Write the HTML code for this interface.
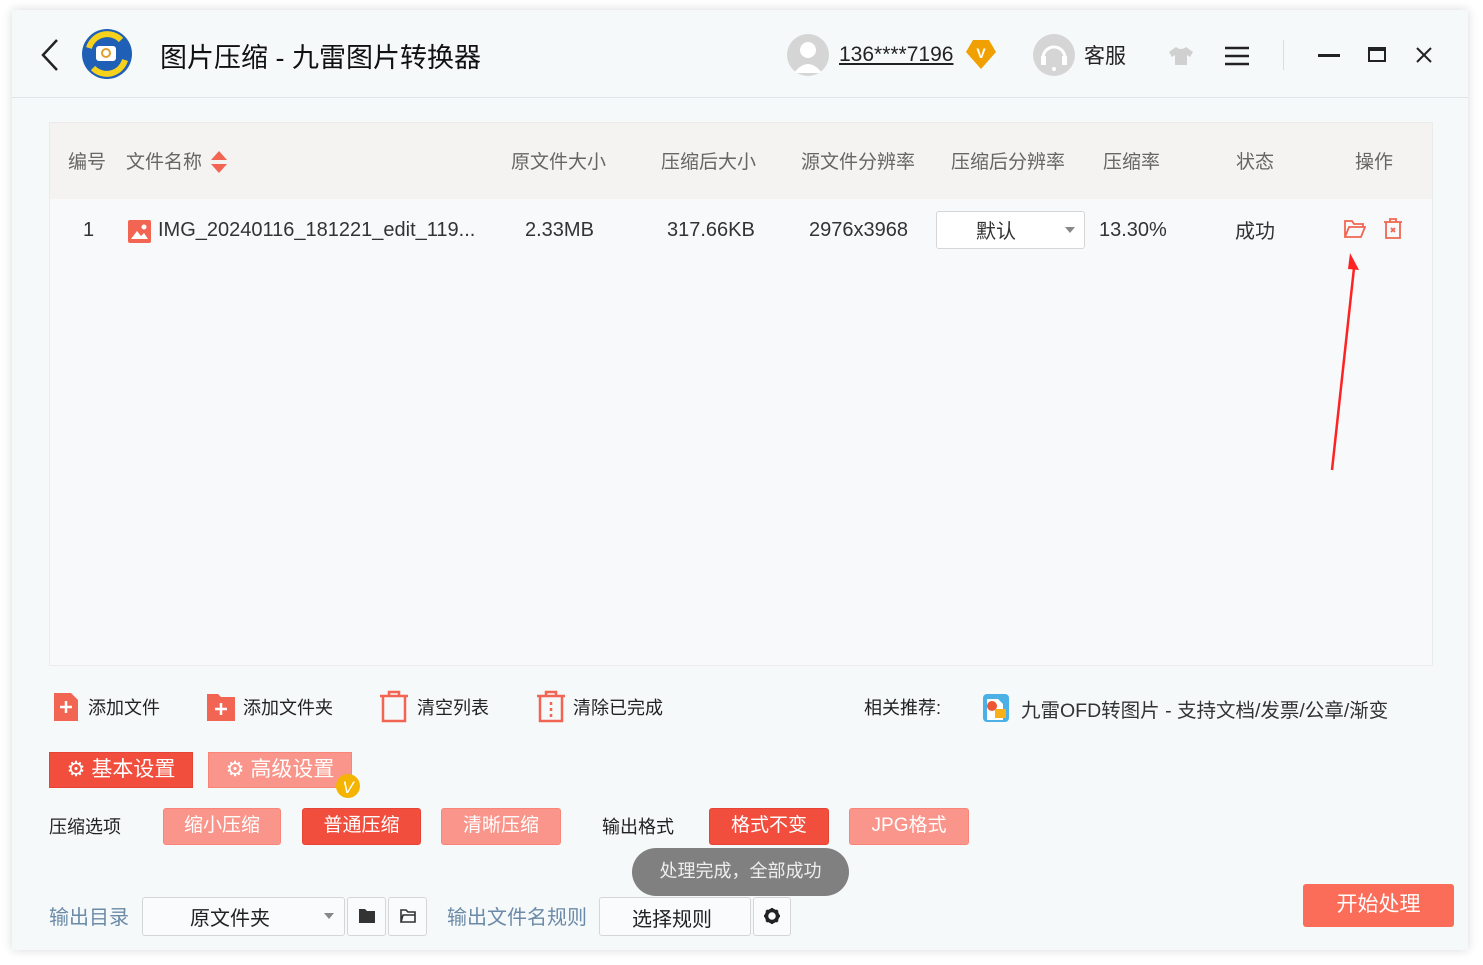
<!DOCTYPE html>
<html><head><meta charset="utf-8"><style>
*{box-sizing:border-box;margin:0;padding:0}
body{width:1483px;height:965px;background:#fff;position:relative;overflow:hidden;font-family:"Liberation Sans","Noto Sans CJK SC",sans-serif;color:#222}
.win{position:absolute;left:12px;top:10px;width:1456px;height:940px;background:#f6f9fa;box-shadow:0 0 10px rgba(0,0,0,.15)}
.a{position:absolute;white-space:nowrap}
.hdr{position:absolute;left:0;top:0;width:1456px;height:88px;border-bottom:1px solid #e2e5e8}
.tbl{position:absolute;left:37px;top:112px;width:1384px;height:544px;border:1px solid #ebebeb;background:#f7f9fa}
.th{position:absolute;left:0;top:0;width:100%;height:76px;background:#f4f3f2}
.th span{position:absolute;top:24px;font-size:19px;color:#666}
.row span{position:absolute;top:96px;font-size:20px;color:#333}
.row span.c{top:92px}
.btn{position:absolute;height:37px;border-radius:3px;font-size:19px;color:#fff;text-align:center;line-height:33px}
.dk{background:#f24e3e;border:1px solid #e64436}
.lt{background:#f9958a;border:1px solid #f88577}
.box{position:absolute;background:#fafbfc;border:1px solid #d4d6d8;border-radius:3px}
</style></head><body>
<div class="win">
<div class="hdr">
 <svg class="a" style="left:28px;top:28px" width="20" height="34"><path d="M17 2 L3 17 L17 32" stroke="#222" stroke-width="2.5" fill="none"/></svg>
 <svg class="a" style="left:69px;top:18px" width="52" height="52"><circle cx="26" cy="26" r="25" fill="#1f5fb5"/><path d="M8 20 A19 19 0 0 1 40 12" stroke="#f7d21c" stroke-width="6" fill="none"/><path d="M44 32 A19 19 0 0 1 12 40" stroke="#f7d21c" stroke-width="6" fill="none"/><rect x="15" y="18" width="20" height="15" rx="3" fill="#fff"/><circle cx="25" cy="25" r="4" fill="none" stroke="#e0a030" stroke-width="2"/></svg>
 <div class="a" style="left:148px;top:26px;font-size:27px;color:#111">图片压缩 - 九雷图片转换器</div>
 <svg class="a" style="left:774px;top:23px" width="44" height="44"><circle cx="22" cy="22" r="21" fill="#d5d5d5"/><circle cx="22" cy="17" r="8" fill="#fff"/><path d="M8 40 Q22 22 36 40Z" fill="#fff"/></svg>
 <div class="a" style="left:827px;top:33px;font-size:21px;text-decoration:underline">136****7196</div>
 <svg class="a" style="left:953px;top:28px" width="32" height="32"><path d="M8 2H24L31 14L16 31L1 14Z" fill="#f0a000"/><text x="16" y="20" font-size="14" font-weight="bold" fill="#fff" text-anchor="middle" font-family="Liberation Sans">V</text></svg>
 <svg class="a" style="left:1020px;top:23px" width="44" height="44"><circle cx="22" cy="22" r="21" fill="#d5d5d5"/><path d="M11 25 A11 11 0 0 1 33 25" stroke="#fff" stroke-width="3" fill="none"/><rect x="9" y="23" width="5" height="9" fill="#fff"/><rect x="30" y="23" width="5" height="9" fill="#fff"/><circle cx="22" cy="36" r="2" fill="#fff"/></svg>
 <div class="a" style="left:1072px;top:30px;font-size:21px">客服</div>
 <svg class="a" style="left:1156px;top:36px" width="26" height="20"><path d="M8 1 L1 6 L4 11 L7 9 L7 19 L19 19 L19 9 L22 11 L25 6 L18 1 Q13 5 8 1Z" fill="#d0d0d0"/></svg>
 <svg class="a" style="left:1212px;top:36px" width="26" height="20"><path d="M1 2H25M1 10H25M1 18H25" stroke="#222" stroke-width="2.5"/></svg>
 <div class="a" style="left:1271px;top:30px;width:1px;height:30px;background:#ddd"></div>
 <div class="a" style="left:1306px;top:44px;width:22px;height:3px;background:#222"></div>
 <div class="a" style="left:1356px;top:37px;width:18px;height:15px;border:2px solid #222;border-top-width:4px"></div>
 <svg class="a" style="left:1403px;top:36px" width="18" height="18"><path d="M2 2L16 16M16 2L2 16" stroke="#222" stroke-width="2"/></svg>
</div>
<div class="tbl">
 <div class="th">
  <span style="left:18px">编号</span><span style="left:76px">文件名称</span>
  <svg class="a" style="left:160px;top:27px" width="18" height="24"><path d="M9 1L17 10H1Z M9 23L17 14H1Z" fill="#f26552"/></svg>
  <span style="left:461px">原文件大小</span><span style="left:611px">压缩后大小</span><span style="left:751px">源文件分辨率</span><span style="left:901px">压缩后分辨率</span><span style="left:1053px">压缩率</span><span style="left:1186px">状态</span><span style="left:1305px">操作</span>
 </div>
 <div class="row">
  <span style="left:33px">1</span>
  <svg class="a" style="left:78px;top:97px" width="23" height="23"><rect width="23" height="23" rx="2" fill="#f26552"/><path d="M3 19L9 11L13 16L16 13L20 19Z" fill="#fff"/><circle cx="16" cy="7" r="2.5" fill="#fff"/></svg>
  <span style="left:108px">IMG_20240116_181221_edit_119...</span>
  <span style="left:475px">2.33MB</span><span style="left:617px">317.66KB</span><span style="left:759px">2976x3968</span>
  <div class="box" style="left:886px;top:88px;width:149px;height:38px;background:#fff"></div>
  <span class="c" style="left:926px">默认</span>
  <svg class="a" style="left:1014px;top:103px" width="12" height="8"><path d="M1 1H11L6 7Z" fill="#888"/></svg>
  <span style="left:1049px">13.30%</span><span class="c" style="left:1185px">成功</span>
  <svg class="a" style="left:1294px;top:96px" width="22" height="20"><path d="M1 18V2H8L10 5H19V8 M1 18L5 8H21L17 18Z" stroke="#f26552" stroke-width="1.8" fill="none"/></svg>
  <svg class="a" style="left:1333px;top:94px" width="20" height="23"><path d="M1 5H19M7 5V2H13V5M3 5V21H17V5M8 11L12 15M12 11L8 15" stroke="#f26552" stroke-width="1.8" fill="none"/></svg>
 </div>
</div>
<svg class="a" style="left:1310px;top:238px" width="40" height="225"><path d="M10 222 L32 20" stroke="#f22" stroke-width="2.5"/><path d="M28 5 L37 22 L26 21Z" fill="#f22"/></svg>
<svg class="a" style="left:41px;top:682px" width="26" height="30"><path d="M1 1H18L25 8V29H1Z" fill="#f26552"/><path d="M13 9V21M7 15H19" stroke="#fff" stroke-width="2.5"/></svg>
<div class="a" style="left:76px;top:684px;font-size:18px">添加文件</div>
<svg class="a" style="left:194px;top:683px" width="30" height="29"><path d="M1 1H12L15 4H29V28H1Z" fill="#f26552"/><path d="M15 10V22M9 16H21" stroke="#fff" stroke-width="2.5"/></svg>
<div class="a" style="left:231px;top:684px;font-size:18px">添加文件夹</div>
<svg class="a" style="left:367px;top:680px" width="30" height="33"><path d="M1 6H29M10 6V2H20V6M4 6V31H26V6" stroke="#f26552" stroke-width="2.5" fill="none"/></svg>
<div class="a" style="left:405px;top:684px;font-size:18px">清空列表</div>
<svg class="a" style="left:524px;top:680px" width="30" height="33"><path d="M1 6H29M10 6V2H20V6M4 6V31H26V6" stroke="#f26552" stroke-width="2.5" fill="none"/><path d="M15 12V15M15 18V21M15 24V27" stroke="#f26552" stroke-width="2.5"/></svg>
<div class="a" style="left:561px;top:684px;font-size:18px">清除已完成</div>
<div class="a" style="left:852px;top:684px;font-size:18px">相关推荐:</div>
<svg class="a" style="left:971px;top:684px" width="26" height="28"><rect width="26" height="28" rx="4" fill="#4ab0e6"/><path d="M4 5H15L20 10V26H4Z" fill="#fff"/><circle cx="9" cy="12" r="5" fill="#e53"/><rect x="12" y="15" width="11" height="9" fill="#f7b018"/></svg>
<div class="a" style="left:1009px;top:684px;font-size:19.5px;color:#333">九雷OFD转图片 - 支持文档/发票/公章/渐变</div>
<div class="btn dk" style="left:37px;top:742px;width:144px;height:36px;border-radius:0;font-size:21px">⚙ 基本设置</div>
<div class="btn lt" style="left:196px;top:742px;width:144px;height:36px;border-radius:0;font-size:21px">⚙ 高级设置</div>
<svg class="a" style="left:323px;top:763px" width="26" height="26"><circle cx="13" cy="13" r="12" fill="#f5b400"/><text x="13" y="20" font-size="17" fill="#fff" text-anchor="middle" font-style="italic" font-family="Liberation Sans">V</text></svg>
<div class="a" style="left:37px;top:803px;font-size:18px">压缩选项</div>
<div class="btn lt" style="left:151px;top:798px;width:118px">缩小压缩</div>
<div class="btn dk" style="left:290px;top:798px;width:119px">普通压缩</div>
<div class="btn lt" style="left:429px;top:798px;width:120px">清晰压缩</div>
<div class="a" style="left:590px;top:803px;font-size:18px">输出格式</div>
<div class="btn dk" style="left:697px;top:798px;width:120px">格式不变</div>
<div class="btn lt" style="left:837px;top:798px;width:120px">JPG格式</div>
<div class="a" style="left:620px;top:838px;width:217px;height:48px;border-radius:24px;background:#808080;color:#eee;font-size:18px;text-align:center;line-height:46px">处理完成，全部成功</div>
<div class="a" style="left:37px;top:891px;font-size:20px;color:#6b8aa8">输出目录</div>
<div class="box" style="left:130px;top:887px;width:203px;height:39px"></div>
<div class="a" style="left:178px;top:892px;font-size:20px">原文件夹</div>
<svg class="a" style="left:312px;top:903px" width="10" height="7"><path d="M0 0H10L5 6Z" fill="#888"/></svg>
<div class="box" style="left:335px;top:887px;width:39px;height:39px"></div>
<svg class="a" style="left:347px;top:899px" width="16" height="14"><path d="M0 0H6L8 2H16V14H0Z" fill="#333"/></svg>
<div class="box" style="left:376px;top:887px;width:39px;height:39px"></div>
<svg class="a" style="left:388px;top:899px" width="16" height="14"><path d="M1 13V1H6L8 3H15V6M1 13L3 6H15V13Z" stroke="#333" stroke-width="1.6" fill="none"/></svg>
<div class="a" style="left:435px;top:891px;font-size:20px;color:#6b8aa8">输出文件名规则</div>
<div class="box" style="left:587px;top:887px;width:152px;height:39px"></div>
<div class="a" style="left:620px;top:893px;font-size:20px">选择规则</div>
<div class="box" style="left:741px;top:887px;width:38px;height:39px"></div>
<svg class="a" style="left:752px;top:898px" width="16" height="16"><circle cx="8" cy="8" r="5.5" fill="none" stroke="#222" stroke-width="3.5"/><path d="M8 0V3M8 13V16M0 8H3M13 8H16M2.3 2.3L4.4 4.4M11.6 11.6L13.7 13.7M2.3 13.7L4.4 11.6M11.6 4.4L13.7 2.3" stroke="#222" stroke-width="2.5"/></svg>
<div class="btn" style="left:1291px;top:874px;width:151px;height:43px;background:#fb6c59;line-height:41px;font-size:21px">开始处理</div>
</div>
</body></html>
